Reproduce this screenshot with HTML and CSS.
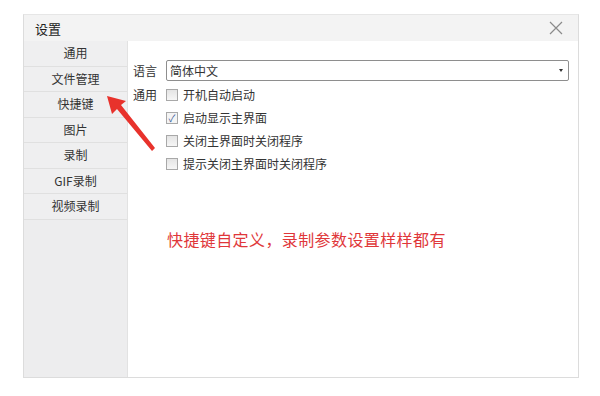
FILE: index.html
```html
<!DOCTYPE html>
<html lang="zh-CN">
<head>
    <meta charset="UTF-8">
    <title>设置</title>
    <link rel="stylesheet" href="styles.css">
</head>
<body>

<div class="dialog">
    <div class="titlebar">
        <span class="title">设置</span>
        <svg class="close" width="14" height="14" viewBox="0 0 14 14">
            <path d="M1 1 L13 13 M13 1 L1 13" stroke="#8a8a8a" stroke-width="1.2" fill="none"/>
        </svg>
    </div>

    <div class="body">
        <ul class="sidebar">
            <li>通用</li>
            <li>文件管理</li>
            <li>快捷键</li>
            <li>图片</li>
            <li>录制</li>
            <li>GIF录制</li>
            <li>视频录制</li>
        </ul>

        <div class="content">
            <div class="row">
                <span class="label">语言</span>
                <div class="select">
                    <span>简体中文</span>
                    <span class="caret"></span>
                </div>
            </div>

            <div class="row">
                <span class="label">通用</span>
                <label class="check"><span class="box"></span>开机自动启动</label>
            </div>
            <div class="row indent">
                <label class="check"><span class="box checked">&#10003;</span>启动显示主界面</label>
            </div>
            <div class="row indent">
                <label class="check"><span class="box"></span>关闭主界面时关闭程序</label>
            </div>
            <div class="row indent">
                <label class="check"><span class="box"></span>提示关闭主界面时关闭程序</label>
            </div>

            <p class="note">快捷键自定义，录制参数设置样样都有</p>
        </div>
    </div>

    <!-- red pointer arrow over the sidebar -->
    <svg class="arrow" width="50" height="56" viewBox="0 0 50 56">
        <polygon points="0,0 19,5 14,9 48,52 45,55 10,13 5,18" fill="#e8322c"/>
    </svg>
</div>

</body>
</html>
```

FILE: styles.css
```css
body {
    margin: 0;
    padding: 14px 0 0 23px;
    background: #fff;
    font-family: "Noto Sans CJK SC", "Microsoft YaHei", sans-serif;
    font-size: 12px;
    color: #333;
}

.dialog {
    position: relative;
    width: 554px;
    height: 362px;
    border: 1px solid #dcdcdc;
    border-top-color: #e6e6e6;
    background: #fff;
    display: flex;
    flex-direction: column;
}

.titlebar {
    height: 26px;
    background: #f3f3f3;
    display: flex;
    align-items: center;
    justify-content: space-between;
    padding: 0 15px 0 11px;
    flex-shrink: 0;
}

.title {
    font-size: 13px;
    color: #222;
}

.body {
    flex: 1;
    display: flex;
}

.sidebar {
    list-style: none;
    margin: 0;
    padding: 0;
    width: 103px;
    background: #ededee;
    border-right: 1px solid #e2e2e2;
}

.sidebar li {
    height: 24.5px;
    line-height: 24.5px;
    text-align: center;
    border-bottom: 1px solid #e0e0e0;
    background: #efeff0;
    color: #333;
}

.content {
    flex: 1;
    padding: 19px 9px 0 5px;
}

.row {
    display: flex;
    align-items: center;
    height: 23px;
}

.row:first-child {
    height: 21px;
    margin-bottom: 2px;
}

.indent {
    padding-left: 33px;
}

.label {
    width: 33px;
}

.select {
    flex: 1;
    height: 19px;
    border: 1px solid #8e8e8e;
    border-radius: 2px;
    display: flex;
    align-items: center;
    justify-content: space-between;
    padding: 0 5px 0 3px;
}

.caret {
    width: 0;
    height: 0;
    border-left: 2.5px solid transparent;
    border-right: 2.5px solid transparent;
    border-top: 3px solid #333;
}

.check {
    display: flex;
    align-items: center;
}

.box {
    width: 10px;
    height: 10px;
    border: 1px solid #a8a8a8;
    background: linear-gradient(#e4e4e4, #f6f6f6);
    margin-right: 5px;
    font-size: 10px;
    line-height: 10px;
    text-align: center;
    color: #3a5a9a;
}

.box.checked {
    background: #f4f4f4;
}

.note {
    margin: 52px 0 0 34px;
    font-size: 16px;
    letter-spacing: 0.4px;
    color: #e0373a;
}

.arrow {
    position: absolute;
    left: 83px;
    top: 81px;
}
```
